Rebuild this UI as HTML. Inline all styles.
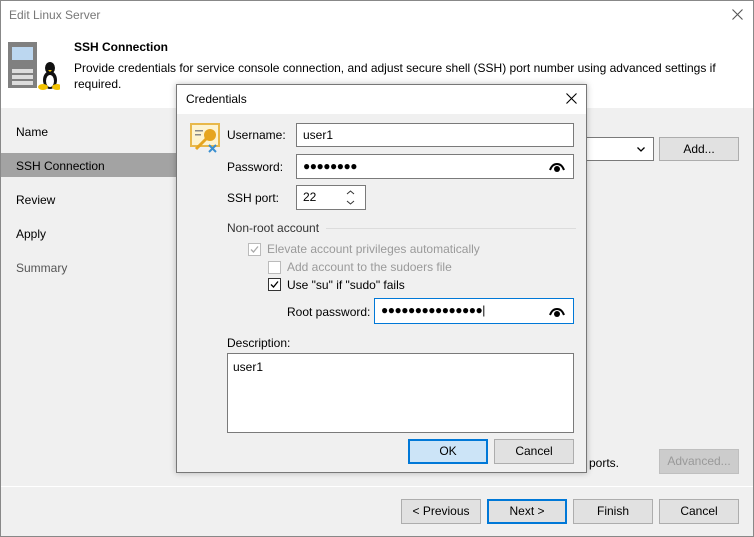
<!DOCTYPE html>
<html><head><style>
*{box-sizing:border-box}
body{margin:0;width:754px;height:537px;overflow:hidden;font-family:"Liberation Sans",sans-serif;font-size:12px;color:#000;background:#f0f0f0;position:relative}
.a{position:absolute}
.btn{position:absolute;background:#e1e1e1;border:1px solid #adadad;text-align:center;line-height:22px;font-size:12px}
.inp{position:absolute;background:#fff;border:1px solid #7a7a7a;padding-left:6px;line-height:22px}
.cb{position:absolute;width:13px;height:13px;border:1px solid #333;background:#fff}
.dots{font-size:12px;letter-spacing:-0.5px}
</style></head><body>
<div class="a" style="left:0;top:0;width:754px;height:537px;border:1px solid #888"></div>
<div class="a" style="left:1px;top:1px;width:752px;height:107px;background:#fff"></div>
<div class="a" style="left:9px;top:8px;color:#777">Edit Linux Server</div>
<svg class="a" style="left:732px;top:9px" width="11" height="11"><path d="M0.5 0.5L10.5 10.5M10.5 0.5L0.5 10.5" stroke="#555" stroke-width="1.1"/></svg>
<svg class="a" style="left:8px;top:42px" width="52" height="50">
<rect x="0" y="0" width="29" height="46" fill="#808080"/><rect x="4" y="5" width="21" height="13" fill="#bcd7f0"/>
<rect x="4" y="27" width="21" height="4" fill="#ddd"/><rect x="4" y="33" width="21" height="4" fill="#ddd"/><rect x="4" y="39" width="21" height="4" fill="#ddd"/>
<ellipse cx="42" cy="26" rx="5" ry="6" fill="#111"/><ellipse cx="42" cy="38" rx="7" ry="9" fill="#111"/><ellipse cx="42" cy="39" rx="4" ry="6" fill="#fff"/>
<ellipse cx="35" cy="45" rx="5" ry="3" fill="#f2c200"/><ellipse cx="49" cy="45" rx="5" ry="3" fill="#f2c200"/><path d="M40 28l2 2 2-2z" fill="#f2c200"/>
</svg>
<div class="a" style="left:74px;top:40px;font-weight:bold">SSH Connection</div>
<div class="a" style="left:74px;top:60px;width:660px;line-height:16px">Provide credentials for service console connection, and adjust secure shell (SSH) port number using advanced settings if required.</div>
<div class="a" style="left:1px;top:153px;width:180px;height:24px;background:#a3a3a3"></div>
<div class="a" style="left:16px;top:125px">Name</div>
<div class="a" style="left:16px;top:159px">SSH Connection</div>
<div class="a" style="left:16px;top:193px">Review</div>
<div class="a" style="left:16px;top:227px">Apply</div>
<div class="a" style="left:16px;top:261px;color:#555">Summary</div>
<div class="inp" style="left:560px;top:137px;width:94px;height:24px"><svg style="position:absolute;right:8px;top:9px" width="8" height="5"><path d="M0.5 0.5L4 4L7.5 0.5" stroke="#000" stroke-width="1.3" fill="none"/></svg></div>
<div class="btn" style="left:659px;top:137px;width:80px;height:24px">Add...</div>
<div class="a" style="left:589px;top:456px">ports.</div>
<div class="btn" style="left:659px;top:449px;width:80px;height:25px;color:#999;background:#ccc;border-color:#bfbfbf">Advanced...</div>
<div class="a" style="left:1px;top:486px;width:752px;height:1px;background:#fff"></div>
<div class="btn" style="left:401px;top:499px;width:80px;height:25px">&lt; Previous</div>
<div class="btn" style="left:487px;top:499px;width:80px;height:25px;border:2px solid #0078d7;line-height:21px">Next &gt;</div>
<div class="btn" style="left:573px;top:499px;width:80px;height:25px">Finish</div>
<div class="btn" style="left:659px;top:499px;width:80px;height:25px">Cancel</div>

<div class="a" style="left:176px;top:84px;width:411px;height:389px;background:#f0f0f0;border:1px solid #777;box-shadow:0 0 6px rgba(0,0,0,.25)"></div>
<div class="a" style="left:177px;top:85px;width:409px;height:29px;background:#fff"></div>
<div class="a" style="left:186px;top:92px">Credentials</div>
<svg class="a" style="left:566px;top:93px" width="11" height="11"><path d="M0.5 0.5L10.5 10.5M10.5 0.5L0.5 10.5" stroke="#000" stroke-width="1.1"/></svg>
<svg class="a" style="left:190px;top:123px" width="32" height="30">
<rect x="1" y="1" width="28" height="22" fill="#fdf3d0" stroke="#e8b84a" stroke-width="2"/>
<rect x="5" y="7" width="8" height="1.5" fill="#888"/><rect x="5" y="11" width="6" height="1.5" fill="#888"/>
<circle cx="20" cy="12" r="6" fill="#e6a520"/><path d="M16 16l-10 10" stroke="#e6a520" stroke-width="3"/>
<path d="M19 22l7 7M26 22l-7 7" stroke="#3a8fd0" stroke-width="2"/>
</svg>
<div class="a" style="left:227px;top:128px">Username:</div>
<div class="inp" style="left:296px;top:123px;width:278px;height:24px">user1</div>
<div class="a" style="left:227px;top:160px">Password:</div>
<div class="inp dots" style="left:296px;top:154px;width:278px;height:25px">●●●●●●●●<svg style="position:absolute;right:8px;top:6px" width="16" height="11"><path d="M1 9C4 1 12 1 15 9" stroke="#000" stroke-width="2" fill="none"/><circle cx="8" cy="8" r="3" fill="#000"/></svg></div>
<div class="a" style="left:227px;top:191px">SSH port:</div>
<div class="inp" style="left:296px;top:185px;width:70px;height:25px">22<svg style="position:absolute;right:10px;top:4px" width="9" height="15"><path d="M1 4L4.5 1L8 4M1 11L4.5 14L8 11" stroke="#333" fill="none"/></svg></div>
<div class="a" style="left:227px;top:221px;color:#333">Non-root account</div>
<div class="a" style="left:326px;top:228px;width:250px;height:1px;background:#dcdcdc"></div>
<div class="cb" style="left:248px;top:243px;border-color:#bbb"><svg width="11" height="11" style="position:absolute;left:0;top:0"><path d="M2 5.5L4.5 8L9 2.5" stroke="#aaa" stroke-width="1.3" fill="none"/></svg></div>
<div class="a" style="left:267px;top:242px;color:#9a9a9a">Elevate account privileges automatically</div>
<div class="cb" style="left:268px;top:261px;border-color:#bbb"></div>
<div class="a" style="left:287px;top:260px;color:#9a9a9a">Add account to the sudoers file</div>
<div class="cb" style="left:268px;top:278px"><svg width="11" height="11" style="position:absolute;left:0;top:0"><path d="M2 5.5L4.5 8L9 2.5" stroke="#000" stroke-width="1.3" fill="none"/></svg></div>
<div class="a" style="left:287px;top:278px">Use "su" if "sudo" fails</div>
<div class="a" style="left:287px;top:305px">Root password:</div>
<div class="inp dots" style="left:374px;top:298px;width:200px;height:26px;border-color:#0078d7">●●●●●●●●●●●●●●●|<svg style="position:absolute;right:8px;top:7px" width="16" height="11"><path d="M1 9C4 1 12 1 15 9" stroke="#000" stroke-width="2" fill="none"/><circle cx="8" cy="8" r="3" fill="#000"/></svg></div>
<div class="a" style="left:227px;top:336px">Description:</div>
<div class="a" style="left:227px;top:353px;width:347px;height:80px;background:#fff;border:1px solid #7a7a7a;padding:6px 5px">user1</div>
<div class="btn" style="left:408px;top:439px;width:80px;height:25px;background:#cce4f7;border:2px solid #0078d7;line-height:21px">OK</div>
<div class="btn" style="left:494px;top:439px;width:80px;height:25px">Cancel</div>
</body></html>
